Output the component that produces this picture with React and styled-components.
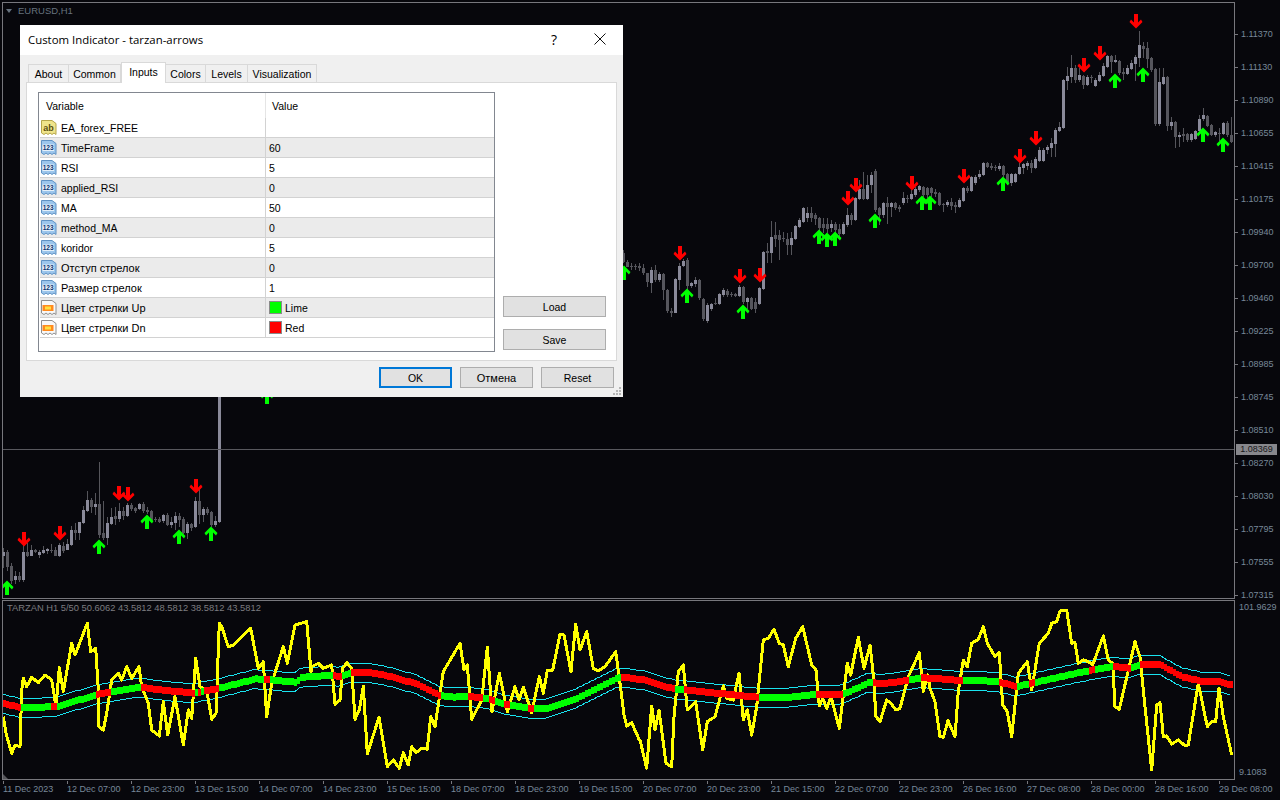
import React from 'react';
import styled, { createGlobalStyle } from 'styled-components';

const GlobalStyle = createGlobalStyle`
  html, body { margin: 0; padding: 0; background: #07070c; overflow: hidden; }
  #root { height: 800px; }
`;

const Terminal = styled.div`
  position: relative;
  width: 1280px;
  height: 800px;
  padding: 2px 0 0 2px;
  box-sizing: border-box;
  display: grid;
  grid-template-columns: 1233px 1fr;
  grid-template-rows: 597px 180px 1fr;
  row-gap: 1px;
  background: #07070c;
  font-family: "Liberation Sans", Arial, sans-serif;
  font-size: 9px;
  color: #778899;
`;

const Pane = styled.div`
  position: relative;
  border: 1px solid #77777d;
  overflow: hidden;
  svg { display: block; }
`;

const PaneTitle = styled.div`
  position: absolute;
  left: ${(p) => p.$left}px;
  top: ${(p) => p.$top}px;
  font-size: ${(p) => p.$size}px;
  color: ${(p) => p.$color};
  white-space: nowrap;
`;

const Triangle = styled.div`
  position: absolute;
  left: 3px;
  top: 6px;
  width: 0;
  height: 0;
  border-left: 3.5px solid transparent;
  border-right: 3.5px solid transparent;
  border-top: 4px solid #66727e;
`;

const Corner = styled.div`
  position: absolute;
  left: 0;
  bottom: 0;
  width: 0;
  height: 0;
  border-bottom: 5px solid #55555a;
  border-right: 5px solid transparent;
`;

const PriceAxis = styled.div`
  position: relative;
  padding-top: 16px;
  display: flex;
  flex-direction: column;
`;

const PriceLabel = styled.div`
  position: relative;
  height: 33px;
  line-height: 33px;
  padding-left: 6px;
  white-space: nowrap;
  &::before {
    content: '';
    position: absolute;
    left: 0;
    top: 16px;
    width: 3px;
    height: 1px;
    background: #77777d;
  }
`;

const PriceTag = styled.div`
  position: absolute;
  left: 1px;
  top: 442px;
  width: 41px;
  height: 11px;
  line-height: 11px;
  text-align: center;
  background: #87878c;
  color: #17171a;
`;

const IndicatorAxis = styled.div`
  display: flex;
  flex-direction: column;
  justify-content: space-between;
  padding: 0 0 1px 4px;
  line-height: 14px;
`;

const TimeAxis = styled.div`
  display: flex;
  grid-column: 1 / 3;
  overflow: hidden;
`;

const TimeCell = styled.div`
  position: relative;
  flex: 0 0 64px;
  box-sizing: border-box;
  padding: 2px 0 0 1px;
  line-height: 13px;
  white-space: nowrap;
  &::before {
    content: '';
    position: absolute;
    left: 1px;
    top: 0;
    width: 1px;
    height: 3px;
    background: #77777d;
  }
`;

const Crosshair = styled.div`
  position: absolute;
  left: 0;
  right: 0;
  top: 446px;
  height: 1px;
  background: #58585e;
`;

/* dialog */

const Dialog = styled.div`
  position: absolute;
  left: 20px;
  top: 25px;
  width: 603px;
  height: 372px;
  display: flex;
  flex-direction: column;
  background: #f0f0f0;
  color: #000;
  font-family: "Liberation Sans", Arial, sans-serif;
  font-size: 10.5px;
`;

const TitleBar = styled.div`
  flex: 0 0 30px;
  box-sizing: border-box;
  display: flex;
  align-items: center;
  background: #fff;
  padding: 0 0 2px 8px;
  font-family: "Open Sans", sans-serif;
  font-size: 11.4px;
  color: #000;
`;

const TitleText = styled.span`
  flex: 1;
`;

const TitleButton = styled.div`
  width: 46px;
  height: 28px;
  display: flex;
  align-items: center;
  justify-content: center;
  font-size: 14px;
  svg { display: block; }
`;

const Body = styled.div`
  flex: 1;
  display: flex;
  flex-direction: column;
  padding: 7px 6px 0 6px;
`;

const Tabs = styled.div`
  display: flex;
  align-items: flex-end;
  height: 21px;
  padding-left: 2px;
  position: relative;
  z-index: 1;
`;

const Tab = styled.div`
  width: ${(p) => p.$w}px;
  height: ${(p) => (p.$active ? 21 : 19)}px;
  box-sizing: border-box;
  display: flex;
  align-items: center;
  justify-content: center;
  background: ${(p) => (p.$active ? '#fff' : '#f0f0f0')};
  border: 1px solid #d9d9d9;
  border-left-width: ${(p) => (p.$first || p.$active ? 1 : 0)}px;
  border-bottom: ${(p) => (p.$active ? 'none' : '1px solid #d9d9d9')};
  padding-bottom: ${(p) => (p.$active ? 3 : 0)}px;
`;

const Panel = styled.div`
  height: 279px;
  box-sizing: border-box;
  margin-top: -1px;
  background: #fff;
  border: 1px solid #d9d9d9;
  padding: 9px 10px 9px 11px;
  display: flex;
  gap: 8px;
`;

const Table = styled.div`
  width: 457px;
  height: 260px;
  box-sizing: border-box;
  border: 1px solid #828790;
  padding-left: 1px;
`;

const HeaderRow = styled.div`
  display: grid;
  grid-template-columns: 226px 1fr;
  height: 25px;
  align-items: center;
`;

const HeaderCell = styled.div`
  height: 100%;
  display: flex;
  align-items: center;
  padding-left: ${(p) => p.$pad}px;
  border-right: ${(p) => (p.$divider ? '1px solid #e5e5e5' : 'none')};
`;

const Row = styled.div`
  display: grid;
  grid-template-columns: 226px 1fr;
  height: 20px;
  box-sizing: border-box;
  border-bottom: 1px solid #d2d2d2;
  background: ${(p) => (p.$shade ? '#ebebeb' : '#fff')};
`;

const NameCell = styled.div`
  display: flex;
  align-items: center;
  gap: 4px;
  padding-left: 1px;
  border-right: 1px solid #d2d2d2;
  font-size: ${(p) => (p.$cyr ? 11 : 10.5)}px;
  svg { display: block; flex: none; }
`;

const ValueCell = styled.div`
  display: flex;
  align-items: center;
  gap: 3px;
  padding-left: 3px;
`;

const Swatch = styled.span`
  width: 13px;
  height: 13px;
  box-sizing: border-box;
  border: 1px solid #8a8a8a;
  background: ${(p) => p.$color};
`;

const SideColumn = styled.div`
  flex: 1;
  display: flex;
  flex-direction: column;
  justify-content: flex-end;
  gap: 12px;
  padding-bottom: 1px;
`;

const Button = styled.div`
  box-sizing: border-box;
  height: 21px;
  width: ${(p) => p.$w || 73}px;
  display: flex;
  align-items: center;
  justify-content: center;
  background: #e1e1e1;
  border: ${(p) => (p.$default ? '2px solid #0078d7' : '1px solid #adadad')};
  font-size: ${(p) => (p.$cyr ? 11 : 10.5)}px;
`;

const Footer = styled.div`
  display: flex;
  justify-content: flex-end;
  gap: 8px;
  padding: 6px 3px 0 0;
`;

const Grip = styled.svg`
  position: absolute;
  right: 2px;
  bottom: 2px;
`;

/* data, everything is in page pixels */

const scaled = (ox, oy, pts) => pts.map(([x, y]) => [ox + x / 3, oy + y / 3]);

const section = (ox, oy, rows) =>
  rows.map((r, i) => {
    const [t, b, dark, wt, wb] = r;
    const seed = (i * 7 + Math.round(t)) % 11;
    const top = wt !== undefined ? wt : t - (seed % 5) * 3 - 2;
    const bottom = wb !== undefined ? wb : b + ((seed * 3) % 4) * 3 + 1;
    return {
      x: Math.round(ox + (10 + 12 * i) / 3),
      top: oy + t / 3,
      bottom: oy + b / 3,
      wickTop: oy + top / 3,
      wickBottom: oy + bottom / 3,
      dark: !!dark,
    };
  });

const candlesA = section(0, 400, [
  [456, 468, 0, 445, 504], [456, 502, 1], [498, 543, 1, 490, 552], [528, 540, 0, 512, 552], [528, 540, 1, 515, 545],
  [456, 540, 0, 430, 545], [456, 468, 1, 430, 470], [450, 468, 0], [450, 457, 1], [456, 465, 0, 450, 473],
  [450, 459, 0], [447, 454, 0, 444, 462], [450, 453, 1, 432, 458], [450, 468, 1, 440, 468], [434, 468, 0, 430, 470],
  [437, 454, 1], [431, 450, 0], [390, 435, 0], [390, 399, 1, 370, 420], [366, 399, 0, 366, 420],
  [330, 369, 0, 318, 372], [300, 333, 0, 274, 336], [300, 321, 1, 295, 340], [312, 321, 0, 280, 345], [312, 405, 1, 186, 415],
  [400, 413, 1, 304, 420], [369, 413, 0, 350, 435], [351, 372, 0, 325, 375], [348, 357, 1, 320, 375], [333, 357, 0, 310, 366],
  [333, 348, 1, 322, 360], [315, 348, 0, 310, 350], [315, 327, 1, 310, 332], [324, 333, 1, 320, 338], [312, 327, 0, 308, 330],
  [312, 333, 1, 306, 338], [330, 336, 1, 322, 342], [333, 360, 1, 330, 366], [357, 359, 1, 350, 367], [357, 366, 1, 350, 369],
  [345, 363, 0, 342, 368], [345, 375, 1, 340, 378], [366, 375, 0, 350, 385], [348, 369, 0, 336, 390], [348, 360, 1, 338, 380],
  [357, 399, 1, 350, 402], [372, 399, 0, 365, 418], [372, 384, 1, 370, 392], [303, 381, 0, 290, 384], [303, 345, 1, 268, 372],
  [327, 345, 0, 322, 366], [327, 339, 1, 320, 345], [336, 375, 1, 332, 380], [363, 375, 0, 348, 380], [-9, 365, 0, -9, 370],
]);

const candlesB = section(620, 150, [
  [310, 337, 1, 300, 340], [337, 350, 1, 330, 352], [347, 350, 1, 340, 360], [347, 350, 1, 342, 360], [348, 355, 1],
  [353, 370, 1], [370, 395, 1, 368, 410], [361, 398, 0, 350, 430], [361, 390, 1, 345, 395], [372, 390, 0],
  [372, 420, 1, 368, 450], [420, 484, 1, 418, 490], [484, 490, 1, 475, 500], [387, 488, 0, 385, 490], [348, 390, 0, 340, 420],
  [333, 347, 0, 328, 350], [330, 408, 1, 325, 420], [400, 408, 0, 395, 415], [390, 402, 0, 380, 410], [390, 445, 1, 388, 450],
  [447, 508, 1, 445, 512], [465, 513, 0, 460, 518], [462, 477, 0, 458, 482], [458, 463, 1, 445, 465], [432, 462, 0, 430, 465],
  [420, 435, 0, 415, 440], [423, 435, 1, 418, 440], [433, 436, 1, 425, 440], [433, 437, 1, 430, 442], [410, 437, 0, 405, 440],
  [411, 457, 1, 408, 462], [445, 457, 0, 440, 478], [445, 477, 1, 440, 480], [455, 477, 1, 445, 490], [415, 462, 0, 412, 465],
  [306, 417, 0, 304, 420], [303, 308, 1, 280, 340], [261, 308, 0, 214, 340], [254, 267, 1, 215, 290], [254, 270, 1, 240, 330],
  [265, 268, 1, 245, 275], [267, 285, 1, 250, 315], [265, 285, 0, 245, 315], [228, 267, 0, 225, 270], [210, 231, 0, 205, 235],
  [174, 215, 0, 170, 220], [190, 204, 0, 170, 215], [190, 204, 1, 172, 215], [196, 207, 1, 188, 225], [204, 234, 1, 200, 245],
  [222, 234, 1, 205, 250], [222, 236, 1, 205, 250], [222, 234, 0, 210, 245], [222, 240, 1, 215, 250], [236, 252, 1, 222, 262],
  [222, 252, 0, 215, 255], [195, 226, 0, 175, 230], [195, 210, 1, 190, 225], [144, 210, 0, 140, 212], [117, 147, 0, 90, 150],
  [117, 147, 1, 65, 150], [104, 147, 0, 75, 150], [75, 106, 0, 65, 130], [62, 180, 1, 58, 185], [175, 195, 1, 170, 225],
  [159, 195, 0, 155, 205], [159, 171, 1, 140, 222], [160, 171, 0, 155, 200], [160, 175, 1, 155, 180], [171, 176, 1, 165, 185],
  [144, 159, 0, 125, 165], [144, 147, 1, 135, 160], [132, 147, 0, 120, 150], [117, 135, 0, 112, 140], [108, 120, 0, 104, 125],
  [110, 135, 1, 108, 140], [115, 135, 1, 112, 145], [115, 130, 1, 112, 142], [125, 132, 1, 118, 140], [129, 165, 1, 125, 168],
  [162, 165, 1, 158, 185], [156, 165, 0, 150, 170], [156, 168, 1, 145, 180], [165, 170, 1, 155, 190], [150, 171, 0, 145, 175],
  [114, 152, 0, 110, 155], [114, 123, 1, 108, 130], [81, 123, 0, 78, 126], [80, 99, 0, 75, 105], [72, 81, 0, 60, 88],
  [39, 75, 0, 36, 78], [39, 50, 1, 36, 55], [48, 53, 1, 40, 60], [50, 55, 1, 45, 62], [48, 57, 0, 40, 62],
  [48, 75, 1, 45, 80], [72, 96, 1, 68, 105], [72, 100, 0, 68, 108], [72, 96, 0, 68, 98], [51, 72, 0, 40, 75],
  [43, 53, 0, 38, 72], [40, 48, 0, 34, 60], [40, 54, 1, 30, 70], [28, 54, 0, 20, 58], [0, 33, 0, -10, 36],
]);

const candlesC = section(1040, 0, [
  [450, 482, 0, 445, 485], [440, 450, 0, 436, 462], [428, 445, 0, 415, 472], [390, 432, 0, 385, 472], [380, 392, 0, 365, 395],
  [240, 385, 0, 238, 388], [228, 243, 0, 200, 270], [204, 231, 0, 165, 250], [204, 240, 1, 196, 250], [225, 240, 0, 205, 245],
  [228, 255, 1, 225, 268], [231, 255, 0, 225, 258], [232, 234, 1, 225, 250], [240, 258, 0, 235, 260], [225, 242, 0, 215, 245],
  [198, 228, 0, 190, 232], [168, 201, 0, 165, 204], [168, 186, 1, 165, 220], [180, 186, 0, 165, 190], [183, 219, 1, 180, 225],
  [216, 222, 1, 205, 240], [204, 222, 0, 195, 225], [189, 207, 0, 180, 210], [170, 192, 0, 165, 242], [135, 174, 0, 92, 200],
  [138, 147, 1, 125, 175], [144, 177, 1, 125, 205], [174, 210, 1, 170, 215], [207, 372, 1, 205, 378], [246, 372, 0, 205, 378],
  [231, 252, 0, 205, 255], [231, 378, 1, 229, 392], [366, 378, 0, 350, 390], [366, 411, 1, 364, 445], [404, 411, 0, 395, 440],
  [402, 408, 1, 385, 425], [402, 420, 1, 400, 425], [402, 420, 0, 398, 425], [393, 417, 0, 390, 420], [357, 393, 0, 345, 398],
  [345, 357, 0, 324, 362], [348, 378, 1, 345, 382], [375, 405, 1, 372, 408], [396, 405, 0, 392, 410], [398, 400, 1, 385, 422],
  [369, 402, 0, 365, 405], [369, 405, 1, 362, 412], [405, 427, 1, 352, 430], [423, 474, 1, 420, 492],
]);

const candles = [...candlesA, ...candlesB, ...candlesC];

const redArrows = [[24, 539], [60, 533], [119, 493], [128, 494], [196, 486], [680, 253], [740, 276], [760, 275], [848, 198], [856, 185], [912, 183], [964, 176], [1020, 156], [1036, 138], [1084, 65], [1100, 53], [1136, 21]];
const greenArrows = [[7, 588], [99, 547], [147, 522], [179, 537], [211, 534], [267, 397], [624, 273], [687, 296], [743, 312], [819, 237], [827, 240], [835, 239], [875, 221], [922, 203], [930, 203], [1003, 184], [1115, 81], [1143, 75], [1203, 135], [1223, 145]];

const ARROW = '0,-7.5 6.5,-1 5,1.5 2,-1.5 2,7 -2,7 -2,-1.5 -5,1.5 -6.5,-1';

const yellow = [
  ...scaled(0, 590, [[10, 380], [18, 430], [35, 490], [45, 465], [60, 470], [65, 300], [70, 265], [80, 290], [95, 262], [115, 278], [135, 255], [155, 270], [168, 350], [178, 232], [190, 305], [215, 160], [225, 195], [262, 100], [272, 185], [287, 175], [295, 300], [297, 410], [310, 420], [320, 370], [335, 270], [355, 250], [365, 270], [380, 230], [395, 265], [417, 230], [425, 290], [445, 340], [455, 420], [478, 438], [490, 335], [503, 435], [525, 320], [550, 465], [565, 360], [575, 385], [587, 205], [600, 290], [620, 300], [635, 388], [648, 370], [658, 100], [665, 110], [685, 170], [700, 165], [752, 115], [775, 235], [790, 215], [800, 380], [815, 280], [850, 170], [862, 220], [885, 105], [920, 95], [933, 245]]),
  ...scaled(310, 600, [[5, 200], [25, 190], [40, 205], [65, 195], [72, 280], [75, 313], [90, 300], [98, 205], [110, 188], [125, 205], [135, 358], [148, 330], [160, 258], [172, 462], [207, 352], [232, 500], [250, 480], [268, 505], [280, 458], [295, 495], [305, 440], [318, 458], [335, 445], [352, 448], [362, 350], [375, 380], [400, 215], [450, 130], [462, 210], [472, 195], [485, 358], [515, 300], [532, 142], [546, 335], [568, 220], [592, 335], [615, 260], [627, 300], [640, 262], [665, 338], [688, 230], [700, 280], [712, 212], [728, 210], [750, 103], [762, 105], [783, 215], [797, 72], [810, 150], [830, 95], [850, 205], [865, 212], [885, 200], [917, 155], [930, 250], [942, 345], [950, 378], [965, 368], [988, 420]]),
  ...scaled(630, 600, [[30, 420], [50, 505], [65, 318], [75, 390], [87, 330], [108, 490], [125, 500], [132, 350], [145, 215], [160, 195], [172, 330], [197, 305], [218, 450], [232, 365], [255, 350], [280, 258], [290, 295], [310, 300], [327, 220], [340, 360], [352, 330], [365, 405], [380, 320], [400, 120], [415, 115], [432, 88], [448, 130], [460, 135], [475, 200], [497, 115], [518, 80], [545, 195], [558, 210], [568, 318], [578, 295], [590, 325], [603, 290], [628, 385], [652, 190], [662, 225], [685, 112], [702, 205], [720, 135], [730, 225], [738, 350], [750, 365], [770, 300], [782, 310], [798, 330], [810, 325], [835, 230], [868, 158], [880, 275], [893, 225], [900, 265], [915, 305], [930, 410], [940, 412]]),
  ...scaled(950, 600, [[-6, 362], [15, 410], [25, 275], [40, 180], [52, 200], [65, 130], [85, 118], [100, 80], [112, 130], [135, 170], [148, 158], [158, 315], [172, 335], [185, 410], [205, 220], [232, 185], [245, 270], [268, 130], [295, 100], [305, 70], [320, 65], [330, 33], [350, 30], [365, 130], [375, 128], [385, 190], [400, 180], [415, 185], [428, 195], [460, 108], [475, 180], [488, 190], [495, 320], [508, 328], [555, 125], [570, 170], [585, 320], [605, 510], [620, 315], [630, 308], [640, 410], [650, 408], [665, 432], [685, 420], [705, 437], [715, 435], [745, 250], [772, 380], [785, 365], [797, 365], [807, 265], [820, 350], [845, 465]]),
];

const midline = [
  ...scaled(0, 590, [[8, 338], [65, 352], [130, 350], [180, 347], [290, 312], [330, 305], [420, 290], [480, 298], [580, 308], [650, 295], [770, 265], [810, 268], [890, 275], [905, 262]]),
  ...scaled(310, 600, [[0, 228], [65, 225], [95, 228], [125, 215], [170, 215], [230, 225], [320, 250], [390, 285], [430, 290], [475, 288], [515, 292], [545, 297], [590, 312], [660, 323], [720, 323], [800, 295], [925, 232]]),
  ...scaled(630, 600, [[0, 232], [50, 240], [130, 265], [165, 268], [280, 280], [380, 290], [480, 290], [555, 282], [640, 282], [720, 245], [760, 250], [840, 238], [880, 232], [930, 235], [990, 240]]),
  ...scaled(950, 600, [[35, 240], [100, 240], [150, 245], [200, 258], [245, 248], [370, 220], [420, 210], [490, 198], [540, 203], [570, 193], [630, 192], [700, 230], [760, 243], [810, 243], [850, 255]]),
];

const redSpans = [[0, 22], [52, 58], [96, 110], [140, 194], [197, 202], [204, 218], [264, 270], [332, 342], [352, 440], [468, 482], [488, 494], [504, 510], [528, 534], [620, 674], [684, 758], [816, 830], [832, 842], [872, 910], [920, 926], [928, 962], [1000, 1018], [1028, 1034], [1088, 1094], [1112, 1130], [1140, 1240]];

const midAt = (x) => {
  for (let i = 1; i < midline.length; i++) {
    if (x <= midline[i][0]) {
      const [x0, y0] = midline[i - 1];
      const [x1, y1] = midline[i];
      return y0 + ((y1 - y0) * (x - x0)) / (x1 - x0);
    }
  }
  return midline[midline.length - 1][1];
};

const bandBars = [];
for (let x = 3; x < 1233; x += 3) bandBars.push({ x, y: Math.round(midAt(x + 1.5)) });

const isRed = (x) => redSpans.some(([a, b]) => x + 1.5 >= a && x + 1.5 < b);
const line = (pts) => pts.map(([x, y]) => `${x.toFixed(1)},${y.toFixed(1)}`).join(' ');
const cyanUpper = bandBars.map((b) => [b.x, b.y - 9]);
const cyanLower = bandBars.map((b) => [b.x, b.y + 10]);

const PRICES = ['1.11370', '1.11130', '1.10890', '1.10655', '1.10415', '1.10175', '1.09940', '1.09700', '1.09460', '1.09225', '1.08985', '1.08745', '1.08510', '1.08270', '1.08030', '1.07795', '1.07555', '1.07315'];
const TIMES = ['11 Dec 2023', '12 Dec 07:00', '12 Dec 23:00', '13 Dec 15:00', '14 Dec 07:00', '14 Dec 23:00', '15 Dec 15:00', '18 Dec 07:00', '18 Dec 23:00', '19 Dec 15:00', '20 Dec 07:00', '20 Dec 23:00', '21 Dec 15:00', '22 Dec 07:00', '22 Dec 23:00', '26 Dec 16:00', '27 Dec 08:00', '28 Dec 00:00', '28 Dec 16:00', '29 Dec 08:00'];

const INPUTS = [
  { icon: 'ab', name: 'EA_forex_FREE', value: '' },
  { icon: 'num', name: 'TimeFrame', value: '60' },
  { icon: 'num', name: 'RSI', value: '5' },
  { icon: 'num', name: 'applied_RSI', value: '0' },
  { icon: 'num', name: 'MA', value: '50' },
  { icon: 'num', name: 'method_MA', value: '0' },
  { icon: 'num', name: 'koridor', value: '5' },
  { icon: 'num', name: 'Отступ стрелок', value: '0', cyr: true },
  { icon: 'num', name: 'Размер стрелок', value: '1', cyr: true },
  { icon: 'color', name: 'Цвет стрелки Up', value: 'Lime', swatch: '#00ff00', cyr: true },
  { icon: 'color', name: 'Цвет стрелки Dn', value: 'Red', swatch: '#ff0000', cyr: true },
];

const TABS = [['About', 41], ['Common', 52], ['Inputs', 45], ['Colors', 40], ['Levels', 42], ['Visualization', 69]];

const DOC = 'M0.5 0.5 H11 L15 3.5 V14.5 L13 13 L11 14.5 L9 13 L7 14.5 L5 13 L3 14.5 L0.5 13 Z';

const ParamIcon = ({ type }) => {
  if (type === 'ab') {
    return (
      <svg width="16" height="16" viewBox="0 0 16 16">
        <path d={DOC} fill="#efe48a" stroke="#b5a64a" />
        <text x="7.5" y="10.5" fontSize="9" fontFamily="Liberation Sans" fontWeight="700" fill="#5a4f10" textAnchor="middle">ab</text>
      </svg>
    );
  }
  if (type === 'num') {
    return (
      <svg width="16" height="16" viewBox="0 0 16 16">
        <path d={DOC} fill="#9cc6ec" stroke="#5f92c4" />
        <rect x="1.5" y="4.5" width="11.5" height="6.5" fill="#e4f0fa" />
        <text x="7.2" y="10.3" fontSize="6.6" fontFamily="Liberation Sans" fontWeight="700" fill="#0b3470" textAnchor="middle">123</text>
      </svg>
    );
  }
  return (
    <svg width="16" height="16" viewBox="0 0 16 16">
      <path d={DOC} fill="#f8f8f8" stroke="#8f8f8f" />
      <rect x="1.5" y="5" width="11" height="6" fill="#ff8a1e" />
      <rect x="4" y="6.5" width="6" height="3" fill="#ffe040" />
    </svg>
  );
};

const Arrow = ({ x, y, up }) => (
  <polygon
    points={ARROW}
    transform={`translate(${x} ${y}) scale(1 ${up ? 1 : -1})`}
    fill={up ? '#00ff00' : '#ff0000'}
  />
);

const MainChart = () => (
  <svg width="1231" height="595" viewBox="3 3 1231 595">
    {candles.map((c, i) => (
      <g key={i} fill={c.dark ? '#56565d' : '#8a8a9a'} shapeRendering="crispEdges">
        <rect x={c.x} y={c.wickTop} width="1" height={Math.max(c.wickBottom - c.wickTop, 1)} fill="#55555b" />
        <rect x={c.x - 1} y={c.top} width="3" height={Math.max(c.bottom - c.top, 1)} />
      </g>
    ))}
    {redArrows.map(([x, y], i) => <Arrow key={i} x={x} y={y} />)}
    {greenArrows.map(([x, y], i) => <Arrow key={i} x={x} y={y} up />)}
  </svg>
);

const IndicatorChart = () => (
  <svg width="1231" height="178" viewBox="3 601 1231 178">
    <polyline points={line(cyanUpper)} fill="none" stroke="#19e3f0" strokeWidth="1" shapeRendering="crispEdges" />
    <polyline points={line(cyanLower)} fill="none" stroke="#19e3f0" strokeWidth="1" shapeRendering="crispEdges" />
    <polyline points={line(yellow)} fill="none" stroke="#ffff00" strokeWidth="3" strokeLinejoin="round" shapeRendering="crispEdges" />
    {bandBars.map((b) => (
      <rect key={b.x} x={b.x} y={b.y - 3} width="3" height="7" fill={isRed(b.x) ? '#ff0000' : '#00ff00'} shapeRendering="crispEdges" />
    ))}
  </svg>
);

const App = () => (
  <Terminal>
    <GlobalStyle />
    <Pane>
      <MainChart />
      <Triangle />
      <PaneTitle $left={15} $top={2} $color="#66727e" $size={9.5}>EURUSD,H1</PaneTitle>
      <Crosshair />
    </Pane>
    <PriceAxis>
      {PRICES.map((p) => <PriceLabel key={p}>{p}</PriceLabel>)}
      <PriceTag>1.08369</PriceTag>
    </PriceAxis>
    <Pane>
      <IndicatorChart />
      <PaneTitle $left={4} $top={2} $color="#7c7c80" $size={9.35}>TARZAN H1 5/50 50.6062 43.5812 48.5812 38.5812 43.5812</PaneTitle>
      <Corner />
    </Pane>
    <IndicatorAxis>
      <span>101.9629</span>
      <span>9.1083</span>
    </IndicatorAxis>
    <TimeAxis>
      {TIMES.map((t) => <TimeCell key={t}>{t}</TimeCell>)}
    </TimeAxis>

    <Dialog>
      <TitleBar>
        <TitleText>Custom Indicator - tarzan-arrows</TitleText>
        <TitleButton>?</TitleButton>
        <TitleButton>
          <svg width="12" height="12" viewBox="0 0 12 12">
            <path d="M0.5 0.5 L11.5 11.5 M11.5 0.5 L0.5 11.5" stroke="#111" strokeWidth="1" fill="none" />
          </svg>
        </TitleButton>
      </TitleBar>
      <Body>
        <Tabs>
          {TABS.map(([label, w], i) => (
            <Tab key={label} $w={w} $first={i === 0} $active={label === 'Inputs'}>{label}</Tab>
          ))}
        </Tabs>
        <Panel>
          <Table>
            <HeaderRow>
              <HeaderCell $pad={6} $divider>Variable</HeaderCell>
              <HeaderCell $pad={6}>Value</HeaderCell>
            </HeaderRow>
            {INPUTS.map((row, i) => (
              <Row key={row.name} $shade={i % 2 === 1}>
                <NameCell $cyr={row.cyr}>
                  <ParamIcon type={row.icon} />
                  {row.name}
                </NameCell>
                <ValueCell>
                  {row.swatch && <Swatch $color={row.swatch} />}
                  {row.value}
                </ValueCell>
              </Row>
            ))}
          </Table>
          <SideColumn>
            <Button $w={103}>Load</Button>
            <Button $w={103}>Save</Button>
          </SideColumn>
        </Panel>
        <Footer>
          <Button $default>OK</Button>
          <Button $cyr>Отмена</Button>
          <Button>Reset</Button>
        </Footer>
      </Body>
      <Grip width="8" height="8" viewBox="0 0 8 8">
        <g fill="#b5b5b5">
          <rect x="6" y="0" width="2" height="2" />
          <rect x="3" y="3" width="2" height="2" />
          <rect x="6" y="3" width="2" height="2" />
          <rect x="0" y="6" width="2" height="2" />
          <rect x="3" y="6" width="2" height="2" />
          <rect x="6" y="6" width="2" height="2" />
        </g>
      </Grip>
    </Dialog>
  </Terminal>
);

export default App;
